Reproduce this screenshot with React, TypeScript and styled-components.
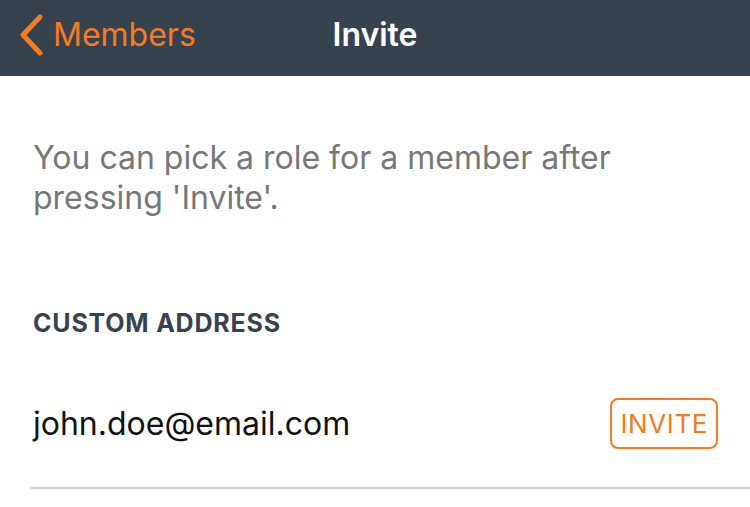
import styled, { createGlobalStyle } from 'styled-components';

const GlobalStyle = createGlobalStyle`
  body {
    margin: 0;
    background: #ffffff;
    font-family: Inter, "Noto Sans", sans-serif;
  }
`;

const Screen = styled.div`
  width: 750px;
  height: 507px;
  overflow: hidden;
  background: #ffffff;
`;

const NavBar = styled.header`
  display: grid;
  grid-template-columns: 1fr auto 1fr;
  align-items: center;
  height: 76px;
  padding: 0 18px 7px;
  box-sizing: border-box;
  background: #37424f;
`;

const BackButton = styled.button`
  display: flex;
  align-items: center;
  gap: 9px;
  padding: 0;
  border: none;
  background: none;
  color: #f47c20;
  font-family: inherit;
  font-size: 32px;
  justify-self: start;
  cursor: pointer;
`;

const Title = styled.h1`
  margin: 0;
  color: #ffffff;
  font-size: 32px;
  font-weight: 600;
`;

const Content = styled.main`
  display: flex;
  flex-direction: column;
  padding-left: 33px;
`;

const Hint = styled.p`
  margin: 62px 0 0;
  max-width: 600px;
  color: #77777a;
  font-size: 32px;
  line-height: 40px;
`;

const SectionLabel = styled.h2`
  margin: 90px 0 0;
  color: #37424f;
  font-size: 25px;
  line-height: 30px;
  font-weight: 700;
  letter-spacing: 0.8px;
`;

const Row = styled.div`
  display: flex;
  align-items: center;
  justify-content: space-between;
  height: 130px;
  box-sizing: border-box;
  margin: 21px 0 0 -3px;
  padding: 0 32px 0 3px;
  border-bottom: 2px solid #d3d3d6;
`;

const Email = styled.span`
  color: #111111;
  font-size: 32px;
`;

const InviteButton = styled.button`
  height: 51px;
  padding: 0 8px;
  border: 2px solid #f47c20;
  border-radius: 8px;
  background: none;
  color: #f47c20;
  font-family: inherit;
  font-size: 26px;
  letter-spacing: 0.6px;
  cursor: pointer;
`;

export default function App() {
  return (
    <Screen>
      <GlobalStyle />
      <NavBar>
        <BackButton>
          <svg width="26" height="42" viewBox="0 0 26 42" fill="none">
            <path
              d="M22 3 L5 21 L22 39"
              stroke="#f47c20"
              strokeWidth="5"
              strokeLinecap="round"
              strokeLinejoin="round"
            />
          </svg>
          Members
        </BackButton>
        <Title>Invite</Title>
        <div />
      </NavBar>
      <Content>
        <Hint>You can pick a role for a member after pressing 'Invite'.</Hint>
        <SectionLabel>CUSTOM ADDRESS</SectionLabel>
        <Row>
          <Email>john.doe@email.com</Email>
          <InviteButton>INVITE</InviteButton>
        </Row>
      </Content>
    </Screen>
  );
}
